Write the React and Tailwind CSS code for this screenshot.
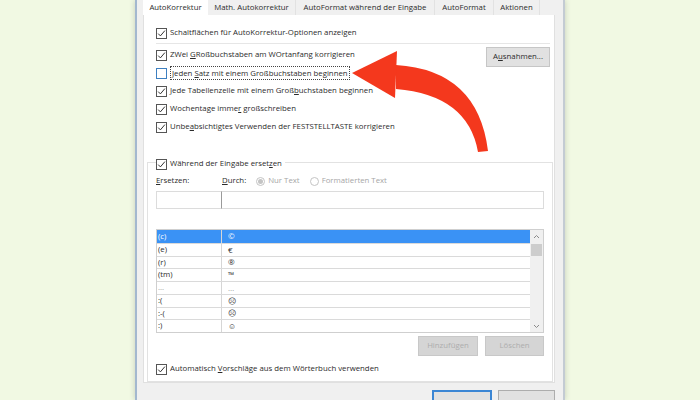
import React from 'react';

// Word "AutoKorrektur" options dialog, cropped, with a red annotation arrow

function Box({ checked, focus }) {
  return (
    <span
      className={`w-[11px] h-[11px] border ${focus ? 'border-[#3d7fc0]' : 'border-[#555]'} bg-white flex items-center justify-center shrink-0`}
    >
      {checked && (
        <svg width="9" height="9" viewBox="0 0 9 9">
          <polyline points="1.2,4.6 3.4,6.9 7.9,1.6" fill="none" stroke="#333" strokeWidth="1" />
        </svg>
      )}
    </span>
  );
}

function Row({ checked, focus, children }) {
  return (
    <div className="h-[18px] flex items-center gap-[3px]">
      <Box checked={checked} focus={focus} />
      {focus ? (
        <span className="border border-dotted border-[#444] px-px leading-[12px]">{children}</span>
      ) : (
        <span>{children}</span>
      )}
    </div>
  );
}

function Radio({ on, label }) {
  return (
    <div className="flex items-center gap-[3px] text-[#a6a6a6]">
      <span className="w-[9px] h-[9px] rounded-full border border-[#c4c4c4] bg-white flex items-center justify-center">
        {on && <span className="w-[5px] h-[5px] rounded-full bg-[#c4c4c4]" />}
      </span>
      <span>{label}</span>
    </div>
  );
}

const entries = [
  ['(c)', '©'],
  ['(e)', '€'],
  ['(r)', '®'],
  ['(tm)', '™'],
  ['...', '…'],
  [':(', '☹'],
  [':-(', '☹'],
  [':)', '☺'],
];

const tabs = [
  ['AutoKorrektur', 'w-[65px]'],
  ['Math. Autokorrektur', 'w-[88px]'],
  ['AutoFormat während der Eingabe', 'w-[139px]'],
  ['AutoFormat', 'w-[59px]'],
  ['Aktionen', 'w-[46px]'],
];

export default function App() {
  return (
    <div className="relative w-[700px] h-[400px] overflow-hidden bg-[#f1f9e3] font-['Open_Sans','Liberation_Sans',sans-serif] text-[7.8px] text-[#2b2b2b]">
      <div className="ml-[135px] w-[430px] h-[400px] bg-[#f0f0f0] border-l-2 border-l-[#a3b8cf] border-r-2 border-r-[#c3cbd3] shadow-[0_0_6px_rgba(0,0,0,0.18)] pl-[6px] pr-[6px] flex flex-col">
        {/* Tabs */}
        <div className="h-[15px] flex">
          {tabs.map(([t, w], i) => (
            <div
              key={t}
              className={`${w} h-[15px] flex items-center justify-center ${i === 0 ? 'bg-white' : 'border-r border-[#e2e2e2]'}`}
            >
              {t}
            </div>
          ))}
        </div>

        {/* Panel */}
        <div className="w-[412px] h-[375px] bg-white border-x border-b border-[#e0e0e0] pl-[12px] pr-[3px] pt-[9px]">
          <Row checked>Schaltflächen für AutoKorrektur-Optionen anzeigen</Row>
          <div className="h-px bg-[#e6e6e6] mt-px mr-[1px]" />
          <div className="flex mt-[2px]">
            <div className="flex-1">
              <Row checked>
                ZWei <span className="underline">G</span>Roßbuchstaben am WOrtanfang korrigieren
              </Row>
              <Row focus>
                Jeden <span className="underline">S</span>atz mit einem Großbuchstaben beginnen
              </Row>
              <Row checked>
                Jede Tabellenzelle mit einem Groß<span className="underline">b</span>uchstaben beginnen
              </Row>
              <Row checked>
                Wochentage imme<span className="underline">r</span> großschreiben
              </Row>
              <Row checked>
                Unbe<span className="underline">a</span>bsichtigtes Verwenden der FESTSTELLTASTE korrigieren
              </Row>
            </div>
            <div className="w-[64px] mr-[1px] mt-px">
              <div className="h-[20px] bg-[#e1e1e1] border border-[#c6c6c6] flex items-center justify-center">
                A<span className="underline">u</span>snahmen...
              </div>
            </div>
          </div>

          {/* Replace group */}
          <fieldset className="mt-[20px] ml-[-9px] mr-px border border-[#e2e2e2] px-[8px] pb-[5px]">
            <legend className="pr-[3px] translate-y-[2px]">
              <div className="h-[12px] flex items-center gap-[3px]">
                <Box checked />
                <span>
                  Während der Eingabe erset<span className="underline">z</span>en
                </span>
              </div>
            </legend>

            <div className="h-[14px] mt-[6px] flex items-center">
              <div className="w-[66px]">
                <span className="underline">E</span>rsetzen:
              </div>
              <div>
                <span className="underline">D</span>urch:
              </div>
              <div className="ml-[10px] flex items-center gap-[10px]">
                <Radio on label="Nur Text" />
                <Radio label="Formatierten Text" />
              </div>
            </div>

            <div className="w-[388px] h-[18px] mt-[3px] flex">
              <div className="w-[66px] border border-[#dcdcdc]" />
              <div className="flex-1 border border-[#dcdcdc] border-l-[#9a9a9a] -ml-px" />
            </div>

            <div className="w-[388px] h-[104px] mt-[20px] border border-[#cfcfcf] flex">
              <div className="flex-1">
                {entries.map(([a, b], i) => (
                  <div
                    key={i}
                    className={`h-[12.75px] flex items-center ${i === 0 ? 'bg-[#3a92f5] text-white' : 'border-t border-[#dadada]'} ${a === '...' ? 'text-[#a0a0a0]' : ''}`}
                  >
                    <div className="w-[65px] h-full pl-px flex items-center border-r border-[#d6d6d6]">{a}</div>
                    <div className="pl-[6px] text-[8px]">{b}</div>
                  </div>
                ))}
              </div>
              <div className="w-[13px] bg-[#f0f0f0] flex flex-col items-center">
                <svg width="13" height="12" viewBox="0 0 13 12" className="mt-px">
                  <polyline points="4,7 6.5,4.5 9,7" fill="none" stroke="#8a8a8a" strokeWidth="1" />
                </svg>
                <div className="w-[11px] h-[12px] bg-[#cdcdcd] mt-[1px]" />
                <div className="flex-1" />
                <svg width="13" height="12" viewBox="0 0 13 12">
                  <polyline points="4,5 6.5,7.5 9,5" fill="none" stroke="#8a8a8a" strokeWidth="1" />
                </svg>
              </div>
            </div>

            <div className="w-[388px] mt-[3px] flex justify-end gap-[7px]">
              <div className="w-[60px] h-[20px] bg-[#d5d5d5] border border-[#c8c8c8] text-[#adadad] flex items-center justify-center">
                Hinzufügen
              </div>
              <div className="w-[59px] h-[20px] bg-[#d5d5d5] border border-[#c8c8c8] text-[#adadad] flex items-center justify-center">
                Löschen
              </div>
            </div>

            <div className="h-[14px] mt-[6px] flex items-center gap-[3px]">
              <Box checked />
              <span>
                Automatisch <span className="underline">V</span>orschläge aus dem Wörterbuch verwenden
              </span>
            </div>
          </fieldset>
        </div>

        {/* Dialog buttons, cut off at the bottom */}
        <div className="w-[412px] mt-[7px] flex justify-end gap-[6px]">
          <div className="w-[60px] h-[20px] bg-[#e1e1e1] border-2 border-[#3b86d4]" />
          <div className="w-[57px] h-[20px] bg-[#e1e1e1] border border-[#adadad]" />
        </div>
      </div>

      {/* Red annotation arrow */}
      <svg className="absolute left-0 top-0 pointer-events-none" width="700" height="400" viewBox="0 0 700 400">
        <path d="M396,65 Q478,70 488,151 L478,152 Q468,95 396,89 Z" fill="#f4381d" />
        <polygon points="352,73 397,51 395,98" fill="#f4381d" />
      </svg>
    </div>
  );
}
